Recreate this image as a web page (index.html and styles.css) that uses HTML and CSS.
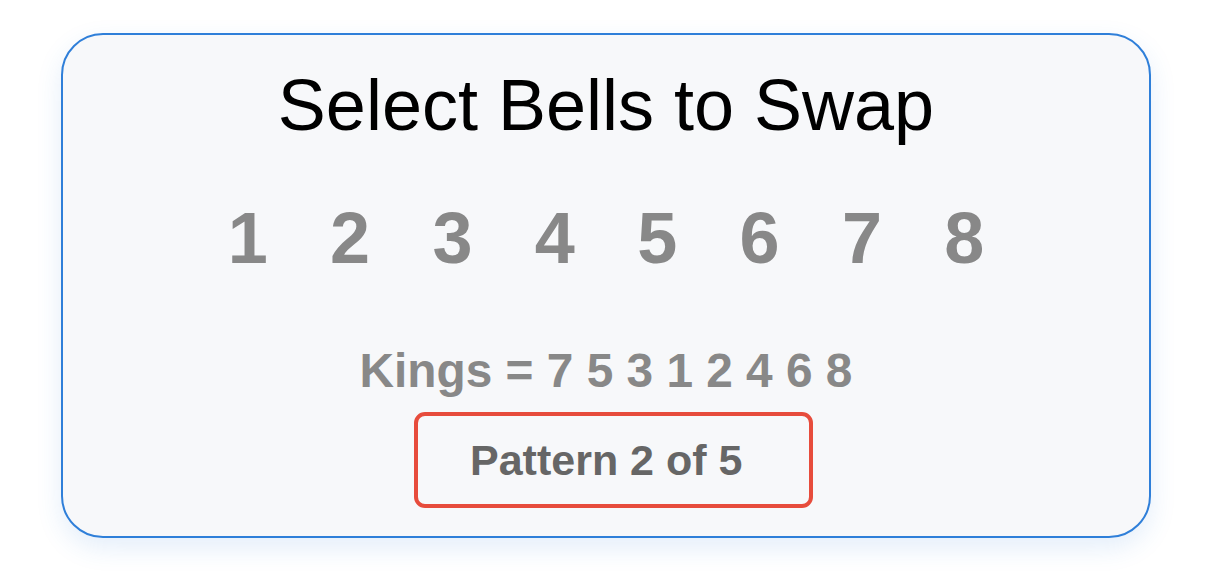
FILE: index.html
```html
<!DOCTYPE html>
<html lang="en">
<head>
<meta charset="utf-8">
<title>Select Bells to Swap</title>
<link rel="stylesheet" href="styles.css">
</head>
<body>
  <main class="card">
    <h1 class="title">Select Bells to Swap</h1>
    <div class="bells">
      <span class="bell">1</span>
      <span class="bell">2</span>
      <span class="bell">3</span>
      <span class="bell">4</span>
      <span class="bell">5</span>
      <span class="bell">6</span>
      <span class="bell">7</span>
      <span class="bell">8</span>
    </div>
    <div class="pattern-name">Kings = 7 5 3 1 2 4 6 8</div>
    <div class="pattern-box">Pattern 2 of 5</div>
  </main>
</body>
</html>
```

FILE: styles.css
```css
html, body {
  margin: 0;
  background: #ffffff;
}

body {
  padding: 33px 0 39px 61px;
  font-family: "Liberation Sans", Arial, sans-serif;
}

.card {
  box-sizing: border-box;
  width: 1090px;
  height: 505px;
  border: 2px solid #2f7fd9;
  border-radius: 42px;
  background: #f7f8fa;
  box-shadow: 0 10px 26px rgba(47, 127, 217, 0.13);
  display: flex;
  flex-direction: column;
  align-items: center;
  padding-top: 34px;
}

.title {
  margin: 0;
  font-size: 72px;
  font-weight: normal;
  line-height: 1;
  color: #000;
}

.bells {
  display: flex;
  gap: 62.4px;
  margin-top: 61px;
}

.bell {
  width: 40px;
  text-align: center;
  font-size: 72px;
  font-weight: bold;
  line-height: 1;
  color: #888888;
}

.pattern-name {
  margin-top: 73px;
  font-size: 47.8px;
  font-weight: bold;
  line-height: 1;
  color: #888888;
}

.pattern-box {
  box-sizing: border-box;
  margin-top: 17px;
  margin-left: 15px;
  width: 399px;
  height: 96px;
  border: 4px solid #e74c3c;
  border-radius: 11px;
  display: flex;
  align-items: center;
  padding-left: 52px;
  padding-top: 2px;
  font-size: 43px;
  font-weight: bold;
  line-height: 1;
  color: #666666;
}
```
